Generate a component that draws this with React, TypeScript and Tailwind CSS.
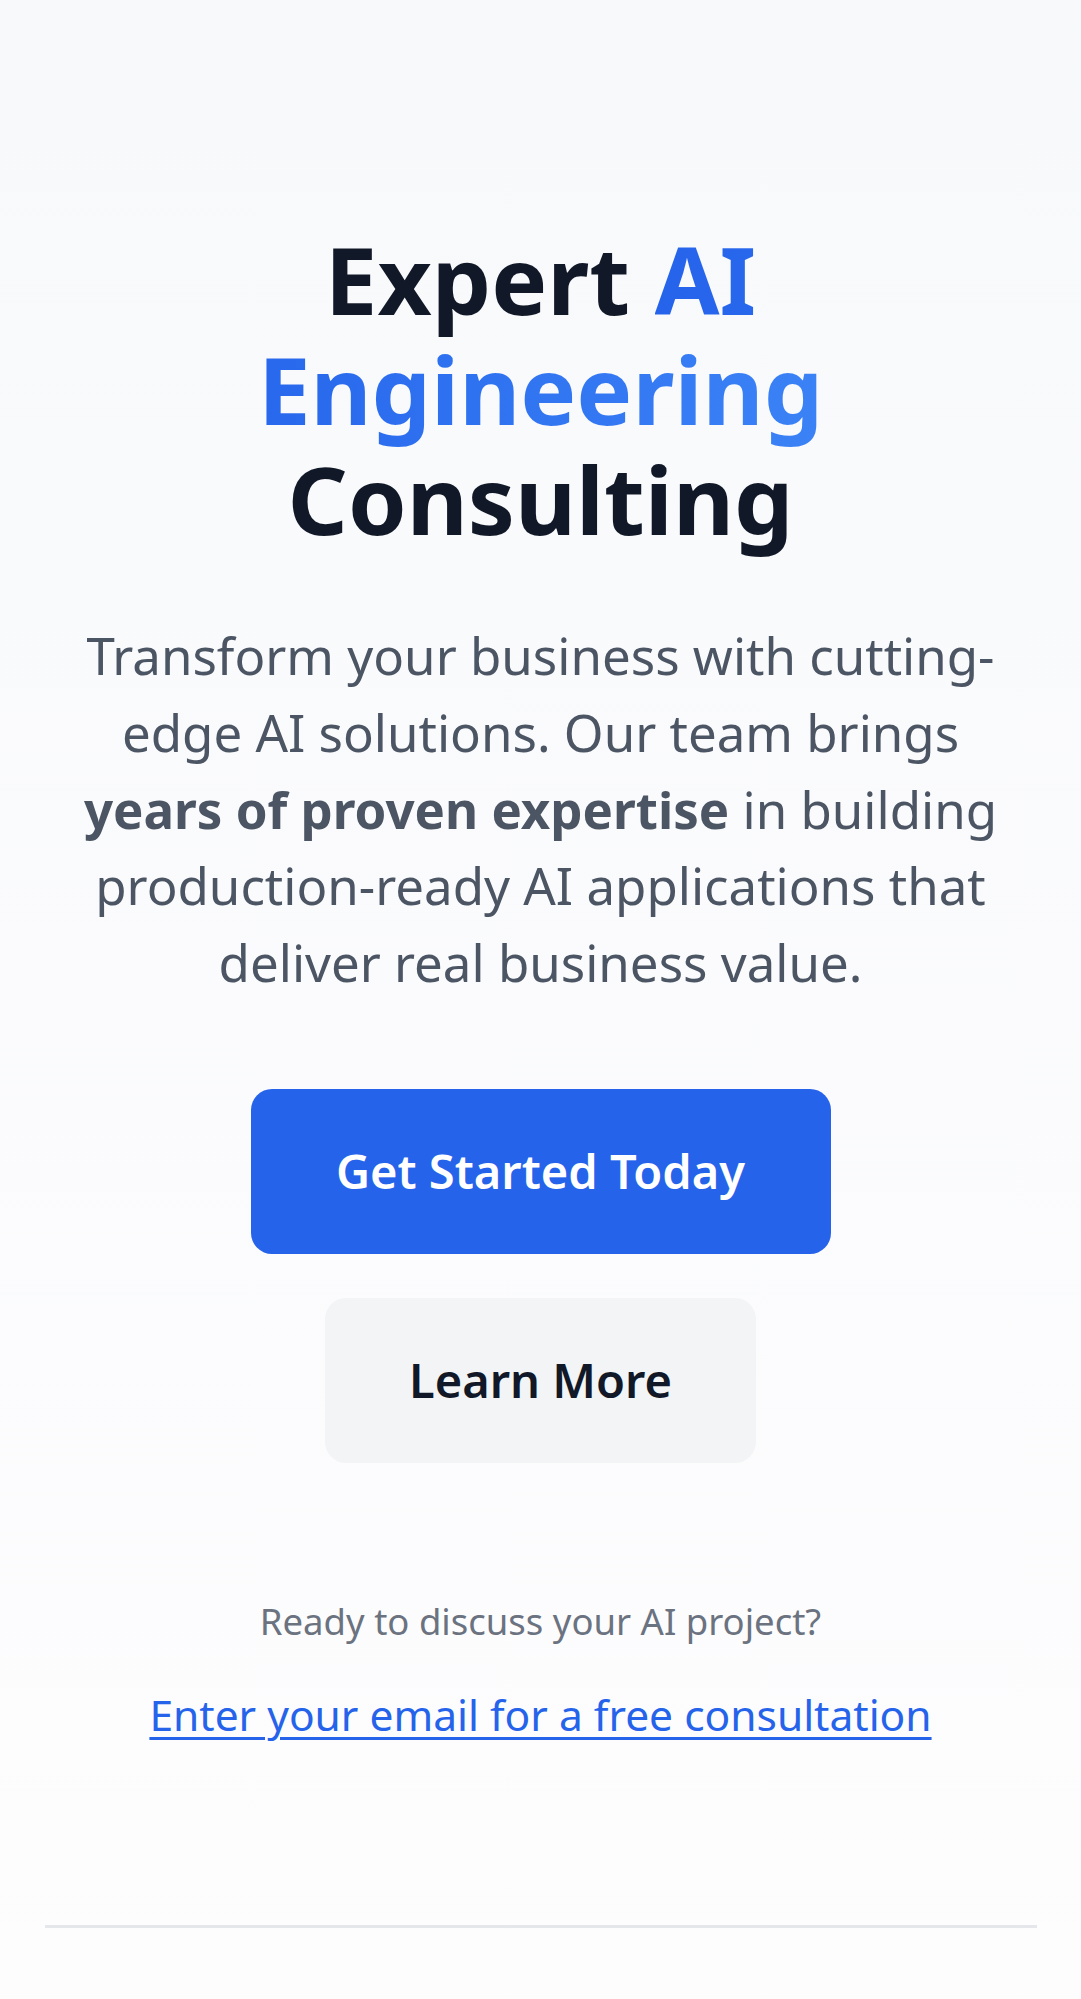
import React from "react";

export default function App() {
  return (
    <div
      className="min-h-[1999px] w-full bg-gradient-to-b from-[#f8f9fb] to-[#fdfdfe] flex flex-col items-center text-center [font-variant-ligatures:none]"
      style={{ fontFamily: '"Noto Sans", "Open Sans", "Liberation Sans", sans-serif' }}
    >
      <h1 className="mt-[224px] text-[94px] leading-[110px] font-bold text-[#111827]">
        Expert{" "}
        <span className="bg-gradient-to-r from-[#2563eb] to-[#3b82f6] bg-clip-text text-transparent">
          AI
          <br />
          Engineering
        </span>
        <br />
        Consulting
      </h1>

      <p className="mt-[63px] text-[51px] leading-[76.8px] text-[#4b5563]">
        Transform your business with cutting-
        <br />
        edge AI solutions. Our team brings
        <br />
        <strong className="font-bold text-[#4b5563]">years of proven expertise</strong> in building
        <br />
        production-ready AI applications that
        <br />
        deliver real business value.
      </p>

      <div className="mt-[88px] flex flex-col items-center gap-[44px]">
        <button className="h-[165px] w-[580px] rounded-[21px] bg-[#2563eb] text-white text-[47px] font-semibold">
          Get Started Today
        </button>
        <button className="h-[165px] w-[431px] rounded-[21px] bg-[#f3f4f6] text-[#111827] text-[47px] font-semibold">
          Learn More
        </button>
      </div>

      <p className="mt-[132px] text-[36.5px] leading-[52px] text-[#6b7280]">
        Ready to discuss your AI project?
      </p>
      <a
        href="#"
        className="mt-[38px] text-[42.5px] leading-[60px] text-[#2563eb] underline underline-offset-[6px] decoration-[3px]"
      >
        Enter your email for a free consultation
      </a>

      <div className="mt-[180px] w-[992px] h-[3px] bg-[#e5e7eb]" />
    </div>
  );
}
